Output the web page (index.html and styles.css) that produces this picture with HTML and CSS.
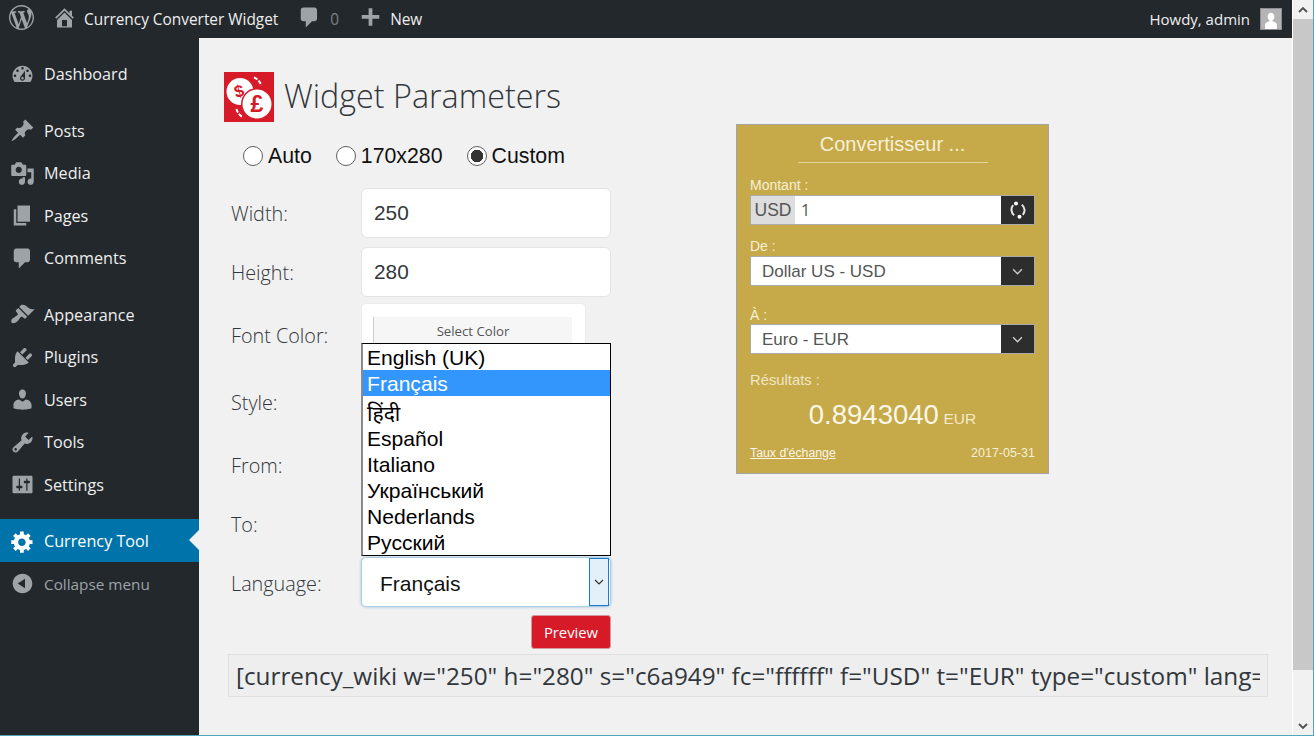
FILE: index.html
```html
<!DOCTYPE html>
<html lang="en">
<head>
  <meta charset="UTF-8">
  <meta name="viewport" content="width=device-width, initial-scale=1.0">
  <title>Widget Parameters</title>
  <link rel="stylesheet" href="styles.css">
</head>
<body>
  <div class="window">
    <div class="page">
      <header class="topbar">
        <svg class="logo-wp" viewBox="0 0 20 20"><path d="M20 10c0-5.51-4.49-10-10-10C4.48 0 0 4.49 0 10c0 5.52 4.48 10 10 10 5.51 0 10-4.48 10-10zM7.78 15.37L4.37 6.22c.55-.02 1.17-.08 1.17-.08.5-.06.44-1.13-.06-1.11 0 0-1.45.11-2.37.11-.18 0-.37 0-.58-.01C4.12 2.69 6.87 1.11 10 1.11c2.33 0 4.45.87 6.05 2.34-.68-.11-1.65.39-1.65 1.58 0 .74.45 1.36.9 2.1.35.61.55 1.36.55 2.46 0 1.49-1.4 5-1.4 5l-3.03-8.37c.54-.02.82-.17.82-.17.5-.05.44-1.25-.06-1.22 0 0-1.44.12-2.38.12-.87 0-2.33-.12-2.33-.12-.5-.03-.56 1.2-.06 1.22l.92.08 1.26 3.41zM17.41 10c.24-.64.74-1.87.43-4.25.7 1.29 1.05 2.71 1.05 4.25 0 3.29-1.73 6.24-4.4 7.78.97-2.59 1.94-5.2 2.92-7.78zM6.1 18.09C3.12 16.65 1.11 13.53 1.11 10c0-1.3.23-2.48.72-3.59C3.25 10.3 4.67 14.2 6.1 18.09zm4.03-6.63l2.58 6.98c-.86.29-1.76.45-2.71.45-.79 0-1.57-.11-2.29-.33.81-2.38 1.62-4.74 2.42-7.1z"/></svg>
        <svg class="bar-icon home" viewBox="0 0 20 20"><path fill-rule="evenodd" d="M16 8.5l1.53 1.53-1.06 1.06L10 4.62l-6.47 6.47-1.06-1.06L10 2.5l4 4v-2h2v4zm-6-2.46l6 5.99V18H4v-5.97zM12 17v-5H8v5h4z"/></svg>
        <span class="site-name">Currency Converter Widget</span>
        <svg class="bar-icon bubble" viewBox="0 0 20 20"><path d="M5 2h9c1.1 0 2 .9 2 2v7c0 1.1-.9 2-2 2h-2l-5 5v-5H5c-1.1 0-2-.9-2-2V4c0-1.1.9-2 2-2z"/></svg>
        <span class="count">0</span>
        <svg class="bar-icon plus" viewBox="0 0 20 20"><path d="M17 8v3h-5.500v5.500h-3V11H3V8h5.500V2.500h3V8H17z"/></svg>
        <span class="new-link">New</span>
        <span class="howdy">Howdy, admin</span>
        <svg class="avatar" viewBox="0 0 22 22"><rect width="22" height="22" fill="#b4b4b4"/><path fill="#fff" d="M11 4c2.300 0 3.700 1.900 3.700 4.200 0 1.900-.9 3.600-2 4.400v1c2.500.7 4.800 1.900 4.800 3.900V22h-13v-4.500c0-2 2.300-3.200 4.800-3.900v-1c-1.100-.8-2-2.500-2-4.400C7.300 5.900 8.700 4 11 4z"/></svg>
      </header>

      <div class="body-wrap">
        <nav class="sidebar">
          <ul class="menu">
            <li><svg viewBox="0 0 20 20"><path fill-rule="evenodd" d="M3.76 16h12.48c1.1-1.37 1.76-3.11 1.76-5 0-4.42-3.58-8-8-8s-8 3.58-8 8c0 1.89.66 3.630 1.760 5zM10 4c.55 0 1 .45 1 1s-.45 1-1 1-1-.45-1-1 .45-1 1-1zM6 6c.55 0 1 .45 1 1s-.45 1-1 1-1-.45-1-1 .45-1 1-1zm8 0c.55 0 1 .45 1 1s-.45 1-1 1-1-.45-1-1 .45-1 1-1zm-5.370 5.550L12 7v6c0 1.100-.9 2-2 2s-2-.9-2-2c0-.57.24-1.080.63-1.450zM4 10c.55 0 1 .45 1 1s-.45 1-1 1-1-.45-1-1 .45-1 1-1zm12 0c.55 0 1 .45 1 1s-.45 1-1 1-1-.45-1-1 .45-1 1-1zm-5 3c0-.55-.45-1-1-1s-1 .45-1 1 .45 1 1 1 1-.45 1-1z"/></svg>Dashboard</li>
          </ul>
          <ul class="menu menu-gap">
            <li><svg viewBox="0 0 20 20"><path d="M10.440 3.020l1.820-1.820 6.360 6.350-1.830 1.820c-1.050-.68-2.480-.57-3.410.36l-.75.75c-.92.93-1.040 2.350-.35 3.410l-1.830 1.820-2.410-2.410-2.800 2.790c-.42.42-3.380 2.710-3.800 2.290s1.860-3.390 2.280-3.810l2.790-2.790L4.100 9.360l1.830-1.820c1.050.69 2.480.57 3.400-.36l.75-.75c.93-.92 1.050-2.350.36-3.410z"/></svg>Posts</li>
            <li><svg viewBox="0 0 20 20"><path fill-rule="evenodd" d="M13 11V4c0-.55-.45-1-1-1h-1.670L9 1H5L3.670 3H2c-.55 0-1 .45-1 1v7c0 .55.45 1 1 1h10c.55 0 1-.45 1-1zM7 4.500c1.380 0 2.500 1.120 2.500 2.500S8.380 9.500 7 9.500 4.500 8.380 4.500 7 5.620 4.500 7 4.500zM14 6h5v10.500c0 1.380-1.120 2.500-2.500 2.500S14 17.880 14 16.500s1.120-2.500 2.500-2.500c.17 0 .34.02.5.05V9h-3V6zm-4 8.050V13h2v3.500c0 1.380-1.120 2.500-2.500 2.500S7 17.880 7 16.500 8.120 14 9.500 14c.17 0 .34.02.5.05z"/></svg>Media</li>
            <li><svg viewBox="0 0 20 20"><path d="M6 15V2h10v13H6zm-1 1h8v2H3V5h2v11z"/></svg>Pages</li>
            <li><svg viewBox="0 0 20 20"><path d="M5 2h9c1.100 0 2 .9 2 2v7c0 1.100-.9 2-2 2h-2l-5 5v-5H5c-1.100 0-2-.9-2-2V4c0-1.100.9-2 2-2z"/></svg>Comments</li>
          </ul>
          <ul class="menu menu-gap">
            <li><svg viewBox="0 0 20 20"><path d="M14.480 11.060L7.410 3.990l1.500-1.500c.5-.56 2.300-.47 3.510.32 1.210.8 1.430 1.280 2.910 2.100 1.180.64 2.450 1.260 4.450.85zM13.770 11.770L6.700 4.700 4.930 6.470c-.39.39-.39 1.020 0 1.410l1.060 1.060c.39.39.39 1.030 0 1.420-.6.6-1.430 1.110-2.210 1.690-.35.26-.7.53-1.010.84C1.430 13.230 1 14.400 1 15.500c0 .8.7 1.500 1.500 1.500 1.100 0 2.270-.43 3.630-1.770.31-.31.58-.66.84-1.010.58-.78 1.090-1.610 1.690-2.210.39-.39 1.030-.39 1.420 0l1.060 1.060c.39.39 1.020.39 1.410 0z"/></svg>Appearance</li>
            <li><svg viewBox="0 0 20 20"><path d="M13.110 4.360L9.870 7.600 8 5.730l3.240-3.240c.35-.34 1.050-.2 1.560.32.52.51.66 1.210.31 1.550zm-8 1.770l.91-1.120 9.010 9.010-1.190.84c-.71.71-2.630 1.160-3.820 1.160H6.140L4.900 17.260c-.59.59-1.540.59-2.120 0-.59-.58-.59-1.530 0-2.120l1.240-1.240v-3.880c0-1.130.4-3.190 1.090-3.890zm7.260 3.970l3.240-3.240c.34-.35 1.040-.21 1.550.31.52.51.66 1.210.31 1.550l-3.240 3.250z"/></svg>Plugins</li>
            <li><svg viewBox="0 0 20 20"><path d="M10 9.250c-2.270 0-2.730-3.440-2.730-3.440C7 4.020 7.820 2 9.970 2c2.160 0 2.980 2.020 2.710 3.810 0 0-.41 3.440-2.680 3.440zm0 2.570L12.720 10c2.390 0 4.520 2.330 4.520 4.530v2.490s-3.650 1.130-7.240 1.130c-3.650 0-7.240-1.130-7.240-1.130v-2.490c0-2.250 1.940-4.480 4.470-4.480z"/></svg>Users</li>
            <li><svg viewBox="0 0 20 20"><path fill-rule="evenodd" d="M16.680 9.770c-1.340 1.340-3.300 1.670-4.950.99l-5.410 6.520c-.99.99-2.590.99-3.580 0s-.99-2.590 0-3.570l6.520-5.420c-.68-1.650-.35-3.610.99-4.950 1.280-1.280 3.120-1.620 4.720-1.060l-2.890 2.890 2.820 2.820 2.860-2.870c.53 1.580.18 3.390-1.080 4.650zM3.810 16.210c.4.39 1.040.39 1.430 0 .4-.4.4-1.040 0-1.430-.39-.4-1.030-.4-1.430 0-.39.39-.39 1.030 0 1.430z"/></svg>Tools</li>
            <li><svg viewBox="0 0 20 20"><path fill-rule="evenodd" d="M18 16V4c0-.55-.45-1-1-1H3c-.55 0-1 .45-1 1v12c0 .55.45 1 1 1h14c.55 0 1-.45 1-1zM8 11h1c.55 0 1 .45 1 1s-.45 1-1 1H8v1.500c0 .28-.22.5-.5.5s-.5-.22-.5-.5V13H6c-.55 0-1-.45-1-1s.45-1 1-1h1V5.500c0-.28.22-.5.5-.5s.5.22.5.5V11zm5-2h-1c-.55 0-1-.45-1-1s.45-1 1-1h1V5.500c0-.28.22-.5.5-.5s.5.22.5.5V7h1c.55 0 1 .45 1 1s-.45 1-1 1h-1v5.500c0 .28-.22.5-.5.5s-.5-.22-.5-.5V9z"/></svg>Settings</li>
          </ul>
          <ul class="menu menu-gap-last">
            <li class="current"><svg viewBox="0 0 20 20"><path fill-rule="evenodd" d="M18 12h-2.180c-.17.7-.44 1.350-.81 1.930l1.540 1.540-2.100 2.100-1.540-1.540c-.58.36-1.230.63-1.910.79V19H8v-2.180c-.68-.16-1.330-.43-1.910-.79l-1.540 1.540-2.120-2.120 1.540-1.540c-.36-.58-.63-1.230-.79-1.910H1V9.030h2.170c.16-.7.44-1.350.8-1.940L2.430 5.550l2.100-2.100 1.540 1.540c.58-.37 1.240-.64 1.930-.81V2h3v2.180c.68.16 1.330.43 1.910.79l1.540-1.540 2.120 2.120-1.540 1.540c.36.59.64 1.240.8 1.940H18V12zm-8.500 1.500c1.660 0 3-1.340 3-3s-1.340-3-3-3-3 1.340-3 3 1.340 3 3 3z"/></svg>Currency Tool</li>
            <li class="collapse"><svg viewBox="0 0 20 20"><path fill-rule="evenodd" d="M10 2.160c4.330 0 7.840 3.510 7.840 7.840s-3.510 7.840-7.840 7.840S2.160 14.330 2.160 10 5.710 2.160 10 2.160zm2 11.720V6.120L6.180 9.970z"/></svg>Collapse menu</li>
          </ul>
        </nav>

        <main class="content">
          <div class="columns">
            <section class="params">
              <div class="title-row">
                <svg class="logo-tool" viewBox="0 0 50 50">
                  <rect width="50" height="50" fill="#d71a28"/>
                  <circle cx="16" cy="19.500" r="13.500" fill="#fff"/>
                  <text x="15" y="25" class="logo-sign" transform="rotate(-15 15 19)">$</text>
                  <circle cx="33" cy="32" r="16" fill="#d71a28"/>
                  <circle cx="33" cy="32" r="14.500" fill="#fff"/>
                  <text x="33" y="40" class="logo-sign big">£</text>
                  <path d="M30 5.500q5 2 7.500 8M12.500 37q1 5 6 8" fill="none" stroke="#fff" stroke-width="2" stroke-dasharray="4 1.500"/>
                </svg>
                <h1>Widget Parameters</h1>
              </div>
              <div class="radios">
                <label><input type="radio" name="size">Auto</label>
                <label><input type="radio" name="size">170x280</label>
                <label><input type="radio" name="size" checked>Custom</label>
              </div>
              <div class="form">
                <div class="row"><label>Width:</label><input class="field" value="250"></div>
                <div class="row"><label>Height:</label><input class="field" value="280"></div>
                <div class="row row-color">
                  <label>Font Color:</label>
                  <div class="color-box"><div class="color-btn">Select Color</div></div>
                </div>
                <div class="row"><label>Style:</label><div class="field"></div></div>
                <div class="row row-from"><label>From:</label><div class="field"></div></div>
                <div class="row"><label>To:</label><div class="field"></div></div>
                <div class="row">
                  <label>Language:</label>
                  <div class="lang-select">
                    <span class="lang-text">Français</span>
                    <span class="lang-arrow"><svg viewBox="0 0 10 6"><path d="M1 1l4 4 4-4" fill="none" stroke="#333" stroke-width="1.200"/></svg></span>
                  </div>
                </div>
                <ul class="lang-list">
                  <li class="low">English (UK)</li>
                  <li class="low selected">Français</li>
                  <li class="hindi">हिंदी</li>
                  <li>Español</li>
                  <li>Italiano</li>
                  <li>Український</li>
                  <li>Nederlands</li>
                  <li>Русский</li>
                </ul>
                <div class="actions"><button class="preview">Preview</button></div>
              </div>
            </section>

            <aside class="widget">
              <div class="widget-title">Convertisseur ...</div>
              <div class="w-label first">Montant :</div>
              <div class="w-group">
                <span class="w-addon">USD</span>
                <span class="w-value">1</span>
                <span class="w-btn"><svg viewBox="0 0 20 20"><path d="M5.200 5.200a6.800 6.800 0 0 0 1 10M14.800 14.800a6.800 6.800 0 0 0-1-10" fill="none" stroke="#e8e8e8" stroke-width="2"/><circle cx="8" cy="3.500" r="2" fill="#fff"/><circle cx="11.500" cy="16.800" r="2" fill="#fff"/></svg></span>
              </div>
              <div class="w-label">De :</div>
              <div class="w-group">
                <span class="w-value select">Dollar US - USD</span>
                <span class="w-btn"><svg class="chev" viewBox="0 0 10 6"><path d="M1 1l4 4 4-4" fill="none" stroke="#ccc" stroke-width="1.300"/></svg></span>
              </div>
              <div class="w-label to">À :</div>
              <div class="w-group">
                <span class="w-value select">Euro - EUR</span>
                <span class="w-btn"><svg class="chev" viewBox="0 0 10 6"><path d="M1 1l4 4 4-4" fill="none" stroke="#ccc" stroke-width="1.300"/></svg></span>
              </div>
              <div class="w-label results">Résultats :</div>
              <div class="w-result">0.8943040 <small>EUR</small></div>
              <div class="w-foot"><a href="#">Taux d'échange</a><span>2017-05-31</span></div>
            </aside>
          </div>
          <input class="shortcode" readonly value='[currency_wiki w="250" h="280" s="c6a949" fc="ffffff" f="USD" t="EUR" type="custom" lang="fr"]'>
        </main>
      </div>
    </div>

    <div class="scrollbar">
      <span class="sb-btn"><svg viewBox="0 0 10 6"><path d="M1 5l4-4 4 4" fill="none" stroke="#505050" stroke-width="1.800"/></svg></span>
      <span class="sb-thumb"></span>
      <span class="sb-btn sb-down"><svg viewBox="0 0 10 6"><path d="M1 1l4 4 4-4" fill="none" stroke="#505050" stroke-width="1.800"/></svg></span>
    </div>
  </div>
</body>
</html>
```

FILE: styles.css
```css
* {
  box-sizing: border-box;
}

html, body {
  margin: 0;
  padding: 0;
  height: 100%;
  overflow: hidden;
}

body {
  font-family: "Open Sans", "Noto Sans", sans-serif;
  background-color: #f1f1f1;
}

ul {
  list-style: none;
  margin: 0;
  padding: 0;
}

.window {
  display: flex;
  width: 1314px;
  height: 736px;
  border-right: 1px solid #4ea8bd;
  border-bottom: 1px solid #4ea8bd;
}

.page {
  flex: 1;
  display: flex;
  flex-direction: column;
  min-width: 0;
}

/* top bar */
.topbar {
  display: flex;
  align-items: center;
  height: 38px;
  flex: none;
  padding-left: 9px;
  padding-right: 10px;
  background-color: #23282d;
  color: #eee;
  font-size: 15.400px;
}

.topbar svg {
  fill: #9ea3a8;
}

.logo-wp {
  width: 25px;
  height: 25px;
  margin-top: -3px;
}

.bar-icon {
  width: 25px;
  height: 25px;
  margin-top: -3px;
}

.home {
  margin-left: 18px;
}

.site-name {
  margin-left: 7px;
}

.bubble {
  margin-left: 19px;
}

.count {
  margin-left: 8px;
  color: #7d8287;
}

.plus {
  margin-left: 19px;
}

.new-link {
  margin-left: 7px;
}

.howdy {
  margin-left: auto;
  font-size: 15px;
}

.avatar {
  width: 22px;
  height: 22px;
  margin-left: 10px;
  border: 1px solid #8c8f94;
}

.body-wrap {
  flex: 1;
  display: flex;
  min-height: 0;
}

/* sidebar */
.sidebar {
  width: 199px;
  flex: none;
  padding-top: 15px;
  background-color: #23282d;
  color: #eee;
  font-size: 16.200px;
}

.menu-gap {
  margin-top: 14px;
}

.menu-gap-last {
  margin-top: 13px;
}

.menu-gap-last li {
  padding-top: 2px;
}

.menu li {
  position: relative;
  display: flex;
  align-items: center;
  height: 42.500px;
  padding-left: 10px;
}

.menu svg {
  width: 25px;
  height: 25px;
  margin-right: 9px;
  fill: #9ea3a8;
  flex: none;
}

.menu .current {
  background-color: #0073aa;
  color: #fff;
}

.menu .current svg {
  fill: #fff;
}

.menu .current::after {
  content: "";
  position: absolute;
  right: 0;
  top: 50%;
  margin-top: -10px;
  border: 10px solid transparent;
  border-right-color: #f1f1f1;
  border-left-width: 0;
}

.menu .collapse {
  color: #9ea3a8;
  font-size: 15.300px;
}

/* main area */
.content {
  flex: 1;
  min-width: 0;
  padding: 34px 25px 0 25px;
}

.columns {
  display: flex;
}

.params {
  width: 512px;
  flex: none;
}

.title-row {
  display: flex;
  align-items: center;
  height: 50px;
}

.logo-tool {
  width: 50px;
  height: 50px;
  flex: none;
}

.logo-sign {
  font-family: "Liberation Sans", sans-serif;
  font-size: 17px;
  font-weight: bold;
  text-anchor: middle;
  fill: #d71a28;
}

.logo-sign.big {
  font-size: 23px;
}

h1 {
  margin: -4px 0 0 10px;
  font-size: 32.300px;
  font-weight: 300;
  color: #32373c;
}

.radios {
  display: flex;
  gap: 24px;
  margin-top: 24px;
  padding-left: 19px;
  height: 20px;
  font-family: "Liberation Sans", sans-serif;
  font-size: 21.300px;
  color: #111;
}

.radios label {
  display: flex;
  align-items: center;
  gap: 5px;
}

.radios input {
  appearance: none;
  width: 20px;
  height: 20px;
  margin: 0;
  border: 1.500px solid #5f5f5f;
  border-radius: 50%;
  background-color: #fff;
}

.radios input:checked {
  background: radial-gradient(circle, #333 0, #333 6px, #fff 6.500px);
}

.form {
  position: relative;
  display: flex;
  flex-direction: column;
  gap: 9px;
  width: 380px;
  margin-top: 22px;
  margin-left: 7px;
}

.row {
  display: flex;
  align-items: center;
  height: 50px;
}

.row label {
  width: 130px;
  flex: none;
  font-size: 19.800px;
  font-weight: 300;
  color: #32373c;
}

.field {
  width: 250px;
  height: 50px;
  padding: 0 12px;
  border: 1px solid #e4e4e4;
  border-radius: 6px;
  background-color: #fff;
  font-family: "Liberation Sans", sans-serif;
  font-size: 20.800px;
  color: #32373c;
}

.row-color {
  height: 65px;
  margin-top: -3px;
  align-items: flex-start;
}

.row-color label {
  margin-top: 19px;
}

.row-from {
  margin-top: 4px;
}

.color-box {
  width: 225px;
  height: 65px;
  padding: 13px 13px 0 11px;
  border-radius: 5px;
  background-color: #fff;
  border: 1px solid #ececec;
}

.color-btn {
  height: 40px;
  padding-top: 5px;
  border-left: 1px solid #ccc;
  background-color: #f6f6f6;
  text-align: center;
  font-size: 13.200px;
  color: #555;
}

.lang-select {
  display: flex;
  align-items: center;
  justify-content: space-between;
  width: 250px;
  height: 50px;
  margin-top: -2px;
  padding: 0 1px 0 18px;
  border: 1px solid #a9cde6;
  border-radius: 5px;
  background-color: #fff;
  box-shadow: 0 0 3px rgba(60, 140, 200, 0.45);
  font-family: "Liberation Sans", sans-serif;
  font-size: 21px;
  color: #111;
}

.lang-text {
  padding-top: 3px;
}

.lang-arrow {
  display: flex;
  align-items: center;
  justify-content: center;
  width: 20px;
  height: 48px;
  border: 1px solid #1c79c9;
  background-color: #e3eff9;
}

.lang-arrow svg {
  width: 10px;
  height: 6px;
}

.lang-list {
  position: absolute;
  left: 130px;
  top: 155px;
  width: 250px;
  height: 213px;
  border: 1px solid #000;
  border-left: 2px solid #8a8a8a;
  background-color: #fff;
  font-family: "Liberation Sans", sans-serif;
  font-size: 21.100px;
  color: #000;
}

.lang-list li {
  height: 26px;
  line-height: 26px;
  padding-left: 4px;
}

.lang-list .low {
  line-height: 28px;
}

.lang-list .selected {
  background-color: #3296fd;
  color: #fff;
}

.lang-list .hindi {
  height: 30px;
  line-height: 33px;
  font-family: "Noto Sans", "Noto Sans Devanagari", "Lohit Devanagari", "FreeSans", sans-serif;
}

.actions {
  display: flex;
  justify-content: flex-end;
  margin-top: -2px;
}

.preview {
  width: 80px;
  height: 34px;
  padding: 0;
  border: 1px solid #d29aa0;
  border-radius: 3px;
  background-color: #d71a28;
  color: #fff;
  font-family: inherit;
  font-size: 14.800px;
}

/* converter preview */
.widget {
  width: 313px;
  height: 350px;
  margin-top: 52px;
  padding: 0 13px;
  border: 1px solid #a4a4a4;
  background-color: #c6a949;
  font-family: "Liberation Sans", sans-serif;
  color: #f7f0d8;
}

.widget-title {
  width: 190px;
  height: 38px;
  margin: 0 auto;
  border-bottom: 1px solid #e4d49c;
  text-align: center;
  font-size: 20px;
  line-height: 39px;
}

.w-label {
  height: 16px;
  margin-top: 13px;
  margin-bottom: 2px;
  font-size: 14px;
  line-height: 16px;
}

.w-label.first {
  margin-top: 14px;
}

.w-label.to {
  margin-top: 20px;
  line-height: 18px;
}

.w-group {
  display: flex;
  height: 30px;
  border: 1px solid #aaa;
  background-color: #fff;
  color: #555;
}

.w-addon {
  width: 44px;
  background-color: #ddd;
  text-align: center;
  font-size: 17.500px;
  line-height: 28px;
}

.w-value {
  flex: 1;
  padding-left: 6px;
  font-family: "Open Sans", sans-serif;
  font-size: 16px;
  line-height: 28px;
}

.w-value.select {
  padding-left: 11px;
  font-family: "Liberation Sans", sans-serif;
  font-size: 17px;
  line-height: 30px;
}

.w-btn {
  display: flex;
  align-items: center;
  justify-content: center;
  width: 33px;
  background-color: #2d2d2d;
}

.w-btn svg {
  width: 20px;
  height: 20px;
}

.w-btn .chev {
  width: 11px;
  height: 7px;
}

.w-label.results {
  margin-top: 18px;
  margin-bottom: 0;
  font-size: 14.800px;
  color: #f0e6c4;
}

.w-result {
  margin-top: 10px;
  height: 34px;
  text-align: center;
  font-size: 27.500px;
  line-height: 34px;
  color: #fbf7e8;
}

.w-result small {
  margin-left: -3px;
  font-size: 15.500px;
  color: #f3e9c8;
}

.w-foot {
  display: flex;
  justify-content: space-between;
  margin-top: 14px;
  font-size: 12.300px;
  line-height: 14px;
}

.w-foot span {
  font-size: 12.500px;
}

.w-foot a {
  color: #fbf7e8;
}

/* shortcode line */
.shortcode {
  display: block;
  width: 1040px;
  height: 43px;
  margin-top: 5px;
  margin-left: 4px;
  padding: 0 7px;
  border: 1px solid #e0e0e0;
  background-color: #eee;
  font-family: "Open Sans", sans-serif;
  font-size: 24.300px;
  color: #32373c;
  outline: none;
}

/* scrollbar */
.scrollbar {
  display: flex;
  flex-direction: column;
  width: 21px;
  flex: none;
  border-left: 1px solid #fff;
  background-color: #f1f1f1;
}

.sb-btn {
  display: flex;
  align-items: center;
  justify-content: center;
  height: 19px;
  flex: none;
}

.sb-btn svg {
  width: 10px;
  height: 6px;
}

.sb-down {
  margin-top: auto;
}

.sb-thumb {
  height: 651px;
  flex: none;
  background-color: #c8c8c8;
}
```
